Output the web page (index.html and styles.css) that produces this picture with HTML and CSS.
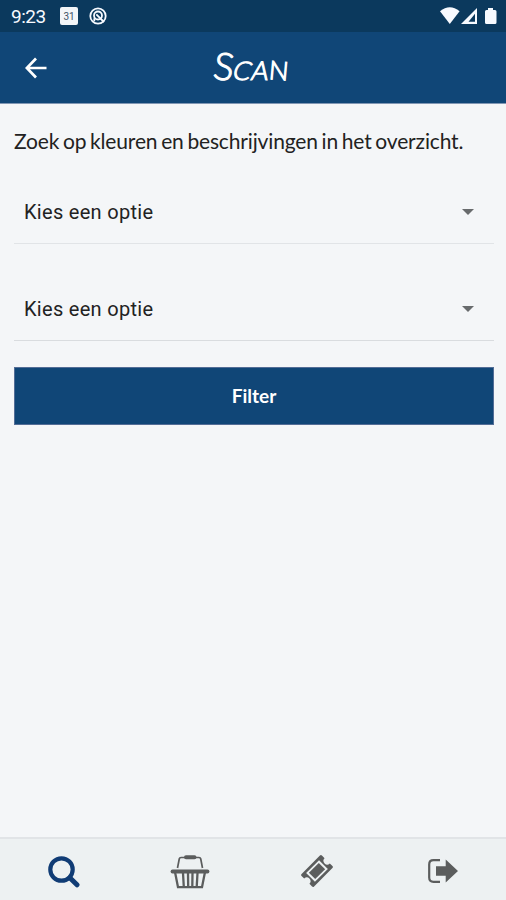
FILE: index.html
```html
<!DOCTYPE html>
<html lang="nl">
<head>
<meta charset="utf-8">
<title>Scan</title>
<link rel="stylesheet" href="styles.css">
</head>
<body>
<div class="app">
  <div class="status">
    <span class="time">9:23</span>
    <span class="calendar">31</span>
    <svg class="sync" width="18" height="18" viewBox="0 0 18 18" fill="none" stroke="currentColor"><circle cx="9" cy="9" r="7.7" stroke-width="1.8"/><circle cx="9" cy="8.5" r="4" stroke-width="1.8"/><path d="M7.3 7.3 15 15M5.3 11.2v3" stroke-width="1.8"/></svg>
    <svg class="signals" width="60" height="20" viewBox="0 0 60 20" fill="currentColor"><path d="M0 4.200Q9.800-3.700 19.600 4.200L9.800 17Z"/><path fill-rule="evenodd" d="M37 1v16H21ZM35 6.800v8h-6.500Z"/><path d="M48 1h5v2h2q1.500 0 1.500 1.500v11q0 1.500-1.500 1.500h-8.500q-1.500 0-1.500-1.500v-11Q45 3 46.500 3H48Z"/></svg>
  </div>
  <header class="header">
    <svg class="back" width="22" height="22" viewBox="0 0 22 22" fill="none" stroke="currentColor" stroke-width="2.7"><path d="M21.500 11H2.500M11 1.500 1.800 11l9.200 9.500"/></svg>
    <h1 class="title"><span class="initial">S</span><span class="letter-c">C</span><span class="letter-a">A</span><span class="letter-n">N</span></h1>
  </header>
  <main class="content">
    <p class="intro">Zoek op kleuren en beschrijvingen in het overzicht.</p>
    <div class="select"><span>Kies een optie</span><i class="caret"></i></div>
    <div class="select second"><span>Kies een optie</span><i class="caret"></i></div>
    <button class="filter">Filter</button>
  </main>
  <nav class="nav">
    <a class="tab active"><svg width="34" height="34" viewBox="0 0 34 34" fill="none" stroke="currentColor"><circle cx="15.500" cy="14.500" r="11.200" stroke-width="4.200"/><path d="m23.800 22.800 7.200 7" stroke-width="5" stroke-linecap="round"/></svg></a>
    <a class="tab"><svg width="40" height="36" viewBox="0 0 40 36" fill="none" stroke="currentColor"><path d="M7.500 14 9.300 4.800Q9.600 3.500 11 3.500h18q1.400 0 1.700 1.300L32.500 14" stroke-width="1.700"/><path d="M16 3.300h8.500" stroke-width="4" stroke-linecap="round"/><path d="M2.500 17.500h35" stroke-width="3.800" stroke-linecap="round"/><path d="M5 18l3 15.200h24L35 18M13 19l.8 14M18 19l.2 14M22.500 19l-.2 14M27.500 19l-.8 14" stroke-width="2.300"/></svg></a>
    <a class="tab"><svg width="34" height="34" viewBox="0 0 34 34"><g transform="translate(18 16) rotate(-45) scale(.96 .93) translate(-17 -17)"><path fill="currentColor" d="M3.500 7.500h27q1.500 0 1.500 1.500v4q-3.800.2-3.800 4t3.800 4v4q0 1.500-1.500 1.500h-27Q2 26.500 2 25v-4q3.800-.2 3.800-4T2 13V9q0-1.500 1.500-1.500Z"/><path class="ticket-face" d="M7.500 10.300h19v13.400h-19Z"/><path fill="currentColor" d="M9.700 12.200h14.600v9.600H9.700Z"/></g></svg></a>
    <a class="tab"><svg width="32" height="30" viewBox="0 0 32 30"><path d="M13 3.200H6.500Q2.200 3.200 2.200 7.500v13q0 4.300 4.300 4.300H13" fill="none" stroke="currentColor" stroke-width="2.200"/><path d="M9 9.300h9.700V2.600L31 14 18.700 25.400v-6.700H9Z" fill="currentColor"/></svg></a>
  </nav>
</div>
</body>
</html>
```
FILE: styles.css
```css
* { box-sizing: border-box; }
body { margin: 0; background: #f4f6f8; color: #222; font-family: Lato, sans-serif; }
.app { width: 506px; height: 900px; display: flex; flex-direction: column; overflow: hidden; }
.status { height: 32px; flex: none; display: flex; align-items: center; padding: 0 6px 0 11px; color: #f7faff; background: #0b395d; }
.time { width: 49px; font: 19px/32px Roboto, sans-serif; letter-spacing: -.5px; padding-top: 1px; white-space: nowrap; }
.calendar { width: 18px; height: 18px; border-radius: 2px; background: #f2f5f8; color: #405468; font: 10px/19px Roboto, sans-serif; text-align: center; }
.sync { margin-left: 11px; }
.signals { margin-left: auto; margin-right: 0; transform: translateY(1px); }
.header { height: 72px; flex: none; display: grid; grid-template-columns: 73px 1fr 73px; align-items: center; background: #104677; border-bottom: 1px solid #8197b4; color: #fff; }
.back { margin-left: 25px; }
.title { margin: 0; padding-right: 4px; display: flex; justify-content: center; align-items: baseline; font: 300 26px/36px Lato, sans-serif; color: #fff; -webkit-text-stroke: 1.1px #fff; }
.title span { display: inline-block; }
.initial { font-size: 38px; transform: rotate(8deg); }
.letter-c { transform: rotate(5deg) skewX(-12deg); }
.letter-a { transform: skewX(-10deg); }
.letter-n { transform: rotate(5deg); }
.content { flex: 1; padding: 23px 12px 0 14px; display: flex; flex-direction: column; }
.intro { margin: 0; font-size: 21px; line-height: 28px; letter-spacing: -.15px; word-spacing: -1.5px; white-space: nowrap; }
.select { height: 64px; margin-top: 25px; padding: 0 20px 0 10px; display: flex; align-items: center; justify-content: space-between; border-bottom: 1px solid #e1e4e7; font: 20px/28px Roboto, sans-serif; letter-spacing: .3px; }
.second { margin-top: 33px; border-color: #d9dcdf; }
.caret { border: 6px solid transparent; border-top-color: #686b6d; border-bottom: 0; }
.filter { flex: none; height: 58px; margin-top: 26px; padding: 0; border: 1px solid #536d96; border-radius: 0; background: #104677; color: #fff; font: 700 19px/28px Lato, sans-serif; }
.nav { height: 63px; flex: none; display: grid; grid-template-columns: repeat(4, 1fr); background: #edf1f2; border-top: 2px solid #e1e4e7; color: #5b5d5d; }
.tab { display: flex; align-items: center; justify-content: center; padding-top: 4px; }
.active { color: #103c75; }
.ticket-face { fill: #edf1f2; }
```
